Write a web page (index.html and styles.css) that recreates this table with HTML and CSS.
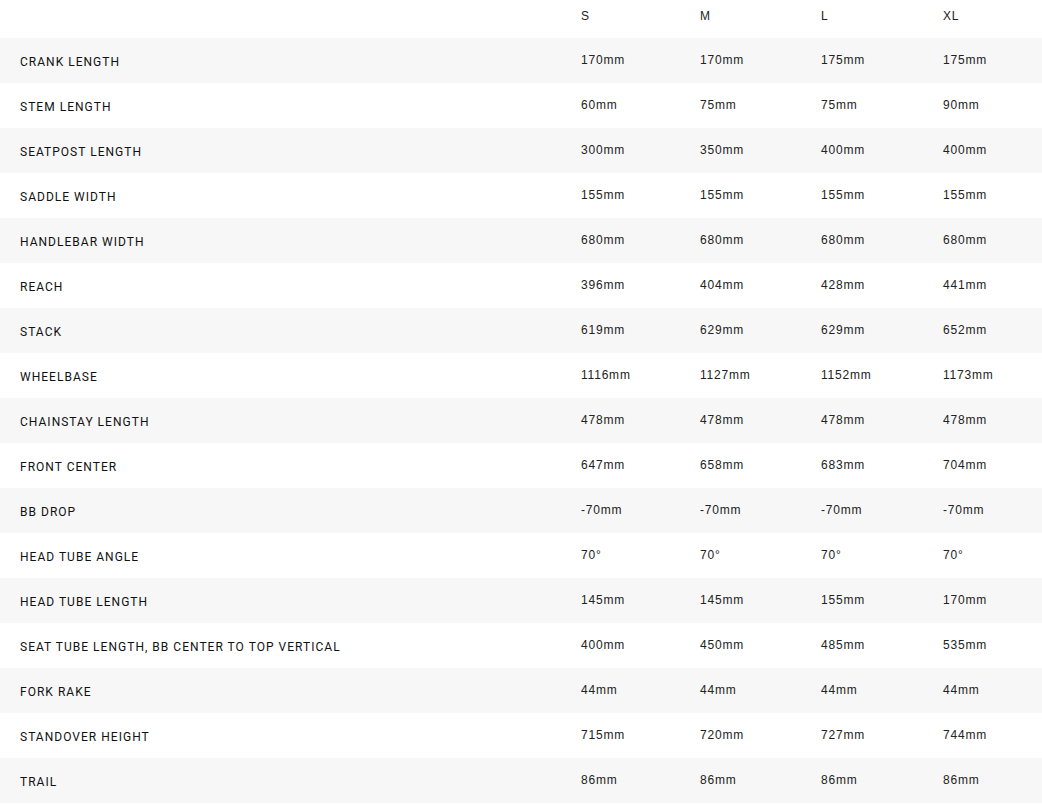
FILE: index.html
```html
<!DOCTYPE html>
<html>
<head>
<meta charset="utf-8">
<link rel="stylesheet" href="styles.css">
</head>
<body>
<div class="geo">
  <div class="row head"><div class="lbl"></div><div class="val">S</div><div class="val">M</div><div class="val">L</div><div class="val">XL</div></div>
  <div class="row"><div class="lbl">CRANK LENGTH</div><div class="val">170mm</div><div class="val">170mm</div><div class="val">175mm</div><div class="val">175mm</div></div>
  <div class="row"><div class="lbl">STEM LENGTH</div><div class="val">60mm</div><div class="val">75mm</div><div class="val">75mm</div><div class="val">90mm</div></div>
  <div class="row"><div class="lbl">SEATPOST LENGTH</div><div class="val">300mm</div><div class="val">350mm</div><div class="val">400mm</div><div class="val">400mm</div></div>
  <div class="row"><div class="lbl">SADDLE WIDTH</div><div class="val">155mm</div><div class="val">155mm</div><div class="val">155mm</div><div class="val">155mm</div></div>
  <div class="row"><div class="lbl">HANDLEBAR WIDTH</div><div class="val">680mm</div><div class="val">680mm</div><div class="val">680mm</div><div class="val">680mm</div></div>
  <div class="row"><div class="lbl">REACH</div><div class="val">396mm</div><div class="val">404mm</div><div class="val">428mm</div><div class="val">441mm</div></div>
  <div class="row"><div class="lbl">STACK</div><div class="val">619mm</div><div class="val">629mm</div><div class="val">629mm</div><div class="val">652mm</div></div>
  <div class="row"><div class="lbl">WHEELBASE</div><div class="val">1116mm</div><div class="val">1127mm</div><div class="val">1152mm</div><div class="val">1173mm</div></div>
  <div class="row"><div class="lbl">CHAINSTAY LENGTH</div><div class="val">478mm</div><div class="val">478mm</div><div class="val">478mm</div><div class="val">478mm</div></div>
  <div class="row"><div class="lbl">FRONT CENTER</div><div class="val">647mm</div><div class="val">658mm</div><div class="val">683mm</div><div class="val">704mm</div></div>
  <div class="row"><div class="lbl">BB DROP</div><div class="val">-70mm</div><div class="val">-70mm</div><div class="val">-70mm</div><div class="val">-70mm</div></div>
  <div class="row"><div class="lbl">HEAD TUBE ANGLE</div><div class="val">70°</div><div class="val">70°</div><div class="val">70°</div><div class="val">70°</div></div>
  <div class="row"><div class="lbl">HEAD TUBE LENGTH</div><div class="val">145mm</div><div class="val">145mm</div><div class="val">155mm</div><div class="val">170mm</div></div>
  <div class="row"><div class="lbl">SEAT TUBE LENGTH, BB CENTER TO TOP VERTICAL</div><div class="val">400mm</div><div class="val">450mm</div><div class="val">485mm</div><div class="val">535mm</div></div>
  <div class="row"><div class="lbl">FORK RAKE</div><div class="val">44mm</div><div class="val">44mm</div><div class="val">44mm</div><div class="val">44mm</div></div>
  <div class="row"><div class="lbl">STANDOVER HEIGHT</div><div class="val">715mm</div><div class="val">720mm</div><div class="val">727mm</div><div class="val">744mm</div></div>
  <div class="row"><div class="lbl">TRAIL</div><div class="val">86mm</div><div class="val">86mm</div><div class="val">86mm</div><div class="val">86mm</div></div>
</div>
</body>
</html>
```
FILE: styles.css
```css
html, body {
  margin: 0;
  padding: 0;
  background: #ffffff;
}
.geo {
  width: 1042px;
  display: flex;
  flex-direction: column;
}
.row {
  display: grid;
  grid-template-columns: 561px 119px 121px 122px 1fr;
  height: 45px;
  align-items: center;
  color: #222222;
}
.row:nth-child(even) {
  background: #f7f7f7;
}
.row.head {
  height: 38px;
  align-items: start;
}
.head .val {
  padding-top: 9px;
  line-height: 14px;
}
.lbl {
  padding-left: 20px;
  font-family: "Roboto", "Liberation Sans", sans-serif;
  font-size: 12px;
  letter-spacing: 1.02px;
  font-weight: 400;
  color: #111111;
  line-height: 14px;
  padding-top: 3px;
}
.val {
  padding-left: 20px;
  font-family: "Liberation Sans", Arial, sans-serif;
  font-size: 12px;
  letter-spacing: 0.8px;
  line-height: 14px;
  color: #222222;
  padding-bottom: 2px;
}
```
